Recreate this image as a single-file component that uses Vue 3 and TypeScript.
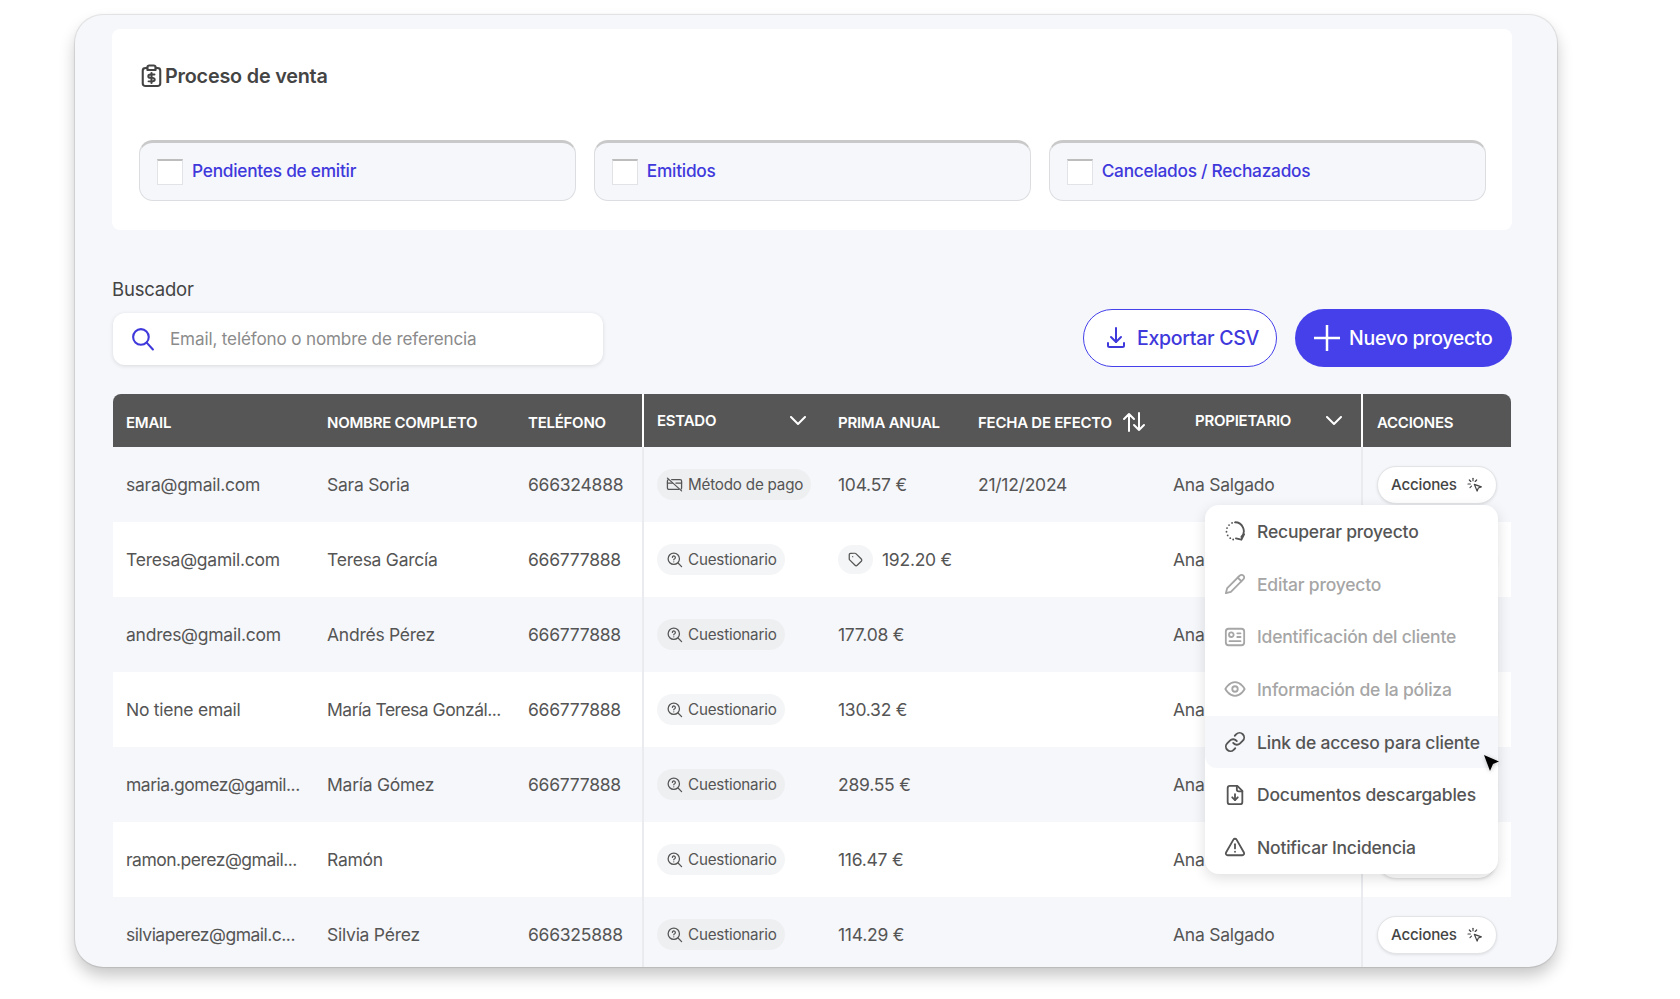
<template>
  <div class="page">
    <div class="card">
      <section class="panel">
        <h2 class="title">
          <svg class="title-icon" viewBox="3 0 18 24" preserveAspectRatio="none"><path v-for="d in icons.clipboard" :key="d" :d="d" /></svg>
          Proceso de venta
        </h2>
        <div class="tabs">
          <label v-for="tab in tabs" :key="tab" class="tab">
            <span class="check"></span>
            <span class="tab-text">{{ tab }}</span>
          </label>
        </div>
      </section>

      <div class="search-label">Buscador</div>
      <div class="toolbar">
        <div class="search">
          <svg class="search-icon" viewBox="0 0 24 24"><path v-for="d in icons.search" :key="d" :d="d" /></svg>
          <span>Email, teléfono o nombre de referencia</span>
        </div>
        <button class="btn btn-outline">
          <svg viewBox="0 0 24 24"><path v-for="d in icons.download" :key="d" :d="d" /></svg>
          Exportar CSV
        </button>
        <button class="btn btn-primary">
          <svg class="plus" viewBox="0 0 26 26"><path d="M13 0v26M0 13h26" /></svg>
          Nuevo proyecto
        </button>
      </div>

      <div class="table">
        <div class="row head">
          <div class="cell">EMAIL</div>
          <div class="cell">NOMBRE COMPLETO</div>
          <div class="cell">TELÉFONO</div>
          <div class="cell split raised">
            ESTADO
            <svg class="chevron" viewBox="0 0 16 10"><path d="M1 1l7 7 7-7" /></svg>
          </div>
          <div class="cell">PRIMA ANUAL</div>
          <div class="cell">
            FECHA DE EFECTO
            <svg class="sort" viewBox="0 0 24 20"><path d="M7 19V2M2 7l5-5 5 5M17 1v17M12 13l5 5 5-5" /></svg>
          </div>
          <div class="cell raised owner-head">
            PROPIETARIO
            <svg class="chevron" viewBox="0 0 16 10"><path d="M1 1l7 7 7-7" /></svg>
          </div>
          <div class="cell split">ACCIONES</div>
        </div>

        <div v-for="r in rows" :key="r.email" class="row body">
          <div :class="['cell', { tight: r.email.endsWith('...') }]">{{ r.email }}</div>
          <div :class="['cell', { tight: r.name.endsWith('...') }]">{{ r.name }}</div>
          <div class="cell">{{ r.phone }}</div>
          <div class="cell split">
            <span class="chip">
              <svg viewBox="0 0 24 24"><path v-for="d in (r.pay ? icons.cardOff : icons.quiz)" :key="d" :d="d" /></svg>
              {{ r.pay ? 'Método de pago' : 'Cuestionario' }}
            </span>
          </div>
          <div class="cell">
            <span v-if="r.tag" class="tag">
              <svg viewBox="0 0 24 24"><path v-for="d in icons.tag" :key="d" :d="d" /></svg>
            </span>
            {{ r.price }}
          </div>
          <div class="cell">{{ r.date }}</div>
          <div class="cell">Ana Salgado</div>
          <div class="cell split">
            <button class="actions">
              Acciones
              <svg viewBox="0 0 24 24"><path v-for="d in icons.click" :key="d" :d="d" /></svg>
            </button>
          </div>
        </div>

        <div class="menu">
          <div
            v-for="item in menu"
            :key="item.label"
            :class="['menu-item', { off: item.off, hover: item.hover }]"
          >
            <svg viewBox="0 0 24 24"><path v-for="d in item.icon" :key="d" :d="d" /></svg>
            {{ item.label }}
          </div>
        </div>
        <svg class="cursor" viewBox="0 0 15 16"><path d="M0 0l15 6.5-6 2.5-3 7z" /></svg>
      </div>
    </div>
  </div>
</template>

<script setup lang="ts">
const icons = {
  clipboard: [
    'M8.5 4H7a2.5 2.5 0 0 0-2.5 2.5v13A2.5 2.5 0 0 0 7 22h10a2.5 2.5 0 0 0 2.5-2.5v-13A2.5 2.5 0 0 0 17 4h-1.500',
    'M10 1.500h4a1.500 1.500 0 0 1 1.500 1.500v3h-7V3A1.500 1.500 0 0 1 10 1.500Z',
    'M14.500 10.500H11a1.700 1.700 0 0 0 0 3.400h2a1.700 1.700 0 0 1 0 3.400H9.500',
    'M12 9v10',
  ],
  search: ['M18 10.500a7.500 7.500 0 1 1-15 0 7.500 7.500 0 0 1 15 0Z', 'M16 16l6 6.500'],
  download: ['M12 2v14', 'M7 11l5 5 5-5', 'M4 17v2.500A1.500 1.500 0 0 0 5.500 21h13a1.500 1.500 0 0 0 1.500-1.500V17'],
  click: [
    'M9 2v3.500', 'M3.500 4.500l2.200 2.200', 'M1.500 10.500H5', 'M14.500 4.500l-2.200 2.200', 'M4.500 16l2.200-2.200',
    'M11 11l10.500 3.800-4.500 1.700-1.800 4.700Z',
  ],
  quiz: [
    'M19 11a8 8 0 1 1-16 0 8 8 0 0 1 16 0Z', 'M22 22l-5-5',
    'M9 9a2.100 2.100 0 1 1 3.200 1.900c-.7.4-1.200.8-1.200 1.600', 'M11 15.200h.01',
  ],
  cardOff: [
    'M2 3l20 18', 'M8 5h12a2 2 0 0 1 2 2v10c0 .6-.3 1.100-.7 1.500', 'M18 19H4a2 2 0 0 1-2-2V7c0-.9.6-1.700 1.400-1.900',
    'M2 10h7', 'M14 10h8',
  ],
  tag: [
    'M12.600 2.600A2 2 0 0 0 11.200 2H4a2 2 0 0 0-2 2v7.200a2 2 0 0 0 .6 1.400l8.700 8.700a2.400 2.400 0 0 0 3.400 0l6.600-6.600a2.400 2.400 0 0 0 0-3.400Z',
    'M7.500 7.500h.01',
  ],
  recover: [
    'M12 2.500a9.500 9.500 0 0 1 7 16', 'M22 15.500l-3 6-6-1.500',
    'M8.800 3.200h.01', 'M5.500 5.500h.01', 'M3.300 8.800h.01', 'M2.700 12.800h.01', 'M4 16.800h.01', 'M6.800 19.800h.01', 'M10 21.300h.01',
  ],
  pencil: ['M17 3a2.850 2.830 0 1 1 4 4L7.500 20.500 2 22l1.500-5.500Z', 'M15 5l4 4'],
  idCard: [
    'M5 3h14a3 3 0 0 1 3 3v12a3 3 0 0 1-3 3H5a3 3 0 0 1-3-3V6a3 3 0 0 1 3-3Z',
    'M10.500 9.500a2.500 2.500 0 1 1-5 0 2.500 2.500 0 0 1 5 0Z', 'M14.500 8H18', 'M14.500 12H18', 'M6 16.500h12',
  ],
  eye: ['M1.500 12s3.700-7.500 10.500-7.500S22.500 12 22.500 12 18.800 19.500 12 19.500 1.500 12 1.500 12Z', 'M15 12a3 3 0 1 1-6 0 3 3 0 0 1 6 0Z'],
  link: [
    'M10 13a5 5 0 0 0 7.540.54l3-3a5 5 0 0 0-7.070-7.070l-1.720 1.710',
    'M14 11a5 5 0 0 0-7.540-.54l-3 3a5 5 0 0 0 7.070 7.070l1.710-1.710',
  ],
  fileDown: [
    'M14.500 2H6.500A2.500 2.500 0 0 0 4 4.500v15A2.500 2.500 0 0 0 6.500 22h11a2.500 2.500 0 0 0 2.500-2.500V7.500Z',
    'M14 2v4a2 2 0 0 0 2 2h4', 'M12 11v6.500', 'M9 14.500l3 3 3-3',
  ],
  alert: [
    'M21.730 18l-8-14a2 2 0 0 0-3.480 0l-8 14A2 2 0 0 0 4 21h16a2 2 0 0 0 1.730-3Z', 'M12 9v4.500', 'M12 17.200h.01',
  ],
}

const tabs = ['Pendientes de emitir', 'Emitidos', 'Cancelados / Rechazados']

const rows = [
  { email: 'sara@gmail.com', name: 'Sara Soria', phone: '666324888', pay: true, price: '104.57 €', date: '21/12/2024' },
  { email: 'Teresa@gamil.com', name: 'Teresa García', phone: '666777888', tag: true, price: '192.20 €' },
  { email: 'andres@gmail.com', name: 'Andrés Pérez', phone: '666777888', price: '177.08 €' },
  { email: 'No tiene email', name: 'María Teresa Gonzál...', phone: '666777888', price: '130.32 €' },
  { email: 'maria.gomez@gamil...', name: 'María Gómez', phone: '666777888', price: '289.55 €' },
  { email: 'ramon.perez@gmail...', name: 'Ramón', phone: '', price: '116.47 €' },
  { email: 'silviaperez@gmail.c...', name: 'Silvia Pérez', phone: '666325888', price: '114.29 €' },
]

const menu = [
  { label: 'Recuperar proyecto', icon: icons.recover },
  { label: 'Editar proyecto', icon: icons.pencil, off: true },
  { label: 'Identificación del cliente', icon: icons.idCard, off: true },
  { label: 'Información de la póliza', icon: icons.eye, off: true },
  { label: 'Link de acceso para cliente', icon: icons.link, hover: true },
  { label: 'Documentos descargables', icon: icons.fileDown },
  { label: 'Notificar Incidencia', icon: icons.alert },
]
</script>

<style>
html, body { margin: 0; background: #fff; }
</style>

<style scoped>
.page {
  height: 999px;
  overflow: hidden;
  padding: 15px 0 0 75px;
  box-sizing: border-box;
  font-family: Inter, "Liberation Sans", sans-serif;
  color: #555;
}

svg {
  fill: none;
  stroke: currentColor;
  stroke-width: 2;
  stroke-linecap: round;
  stroke-linejoin: round;
  flex-shrink: 0;
}

.card {
  width: 1482px;
  height: 952px;
  box-sizing: border-box;
  padding: 14px 45px 0 37px;
  background: #f5f7fb;
  border-radius: 28px;
  overflow: hidden;
  box-shadow: 0 0 1px 1px rgba(0, 0, 0, 0.1), 0 9px 16px rgba(0, 0, 0, 0.22);
}

.panel {
  background: #fff;
  border-radius: 8px;
  padding: 35px 26.5px 29px 27px;
}

.title {
  display: flex;
  align-items: center;
  gap: 3px;
  margin: 0 0 52px 2px;
  height: 24px;
  font-size: 19.8px;
  font-weight: 600;
  letter-spacing: -0.2px;
  color: #444;
}

.title-icon {
  width: 21px;
  height: 24px;
  stroke-width: 1.8;
}

.tabs {
  display: grid;
  grid-template-columns: repeat(3, 1fr);
  gap: 18px;
}

.tab {
  display: flex;
  align-items: center;
  gap: 9px;
  height: 61px;
  box-sizing: border-box;
  padding-left: 17px;
  background: #f5f7fb;
  border: 1px solid #dcdde0;
  border-top: 3px solid #c9c9c9;
  border-radius: 14px;
  font-size: 17.3px;
  font-weight: 500;
  letter-spacing: -0.25px;
  color: #3f39dc;
}

.tab-text {
  margin-bottom: 2px;
}

.check {
  width: 26px;
  height: 26px;
  box-sizing: border-box;
  background: #fff;
  border: 1px solid #e2e3e6;
  border-top: 2px solid #bdbdbd;
}

.search-label {
  margin-top: 47px;
  height: 24px;
  line-height: 24px;
  font-size: 18.5px;
  letter-spacing: -0.2px;
  color: #444;
}

.toolbar {
  display: flex;
  align-items: center;
  gap: 18px;
  margin-top: 9px;
  height: 57px;
}

.search {
  display: flex;
  align-items: center;
  gap: 15px;
  width: 490px;
  height: 52px;
  margin-left: 1px;
  margin-right: auto;
  box-sizing: border-box;
  padding-left: 17px;
  background: #fff;
  border-radius: 12px;
  box-shadow: 0 1px 4px rgba(0, 0, 0, 0.12);
  font-size: 17.1px;
  letter-spacing: -0.15px;
  color: #8b8b8b;
}

.search-icon {
  width: 25px;
  height: 25px;
  color: #3f39dc;
}

.btn {
  display: flex;
  align-items: center;
  height: 58px;
  margin-top: -1px;
  box-sizing: border-box;
  border-radius: 29px;
  padding-bottom: 2px;
  font-family: inherit;
  font-size: 19.5px;
  font-weight: 500;
  letter-spacing: -0.3px;
  white-space: nowrap;
}

.btn-outline {
  width: 194px;
  gap: 9px;
  padding-left: 20px;
  padding-right: 0;
  background: #fff;
  border: 1.5px solid #4540ea;
  color: #3f39dc;
}

.btn-outline svg {
  width: 24px;
  height: 24px;
}

.btn-primary {
  width: 217px;
  gap: 9px;
  padding-left: 19px;
  padding-right: 0;
  background: #4540ea;
  border: none;
  color: #fff;
}

.plus {
  width: 26px;
  height: 26px;
  stroke-width: 2.500;
  stroke-linecap: butt;
}

.table {
  position: relative;
  width: 1398px;
  margin: 27px 0 0 1px;
}

.row {
  display: grid;
  grid-template-columns: 201px 201px 127px 183px 140px 195px 201px 150px;
}

.cell {
  display: flex;
  align-items: center;
  padding-left: 13px;
  white-space: nowrap;
  min-width: 0;
}

.tight {
  letter-spacing: -0.5px;
}

.head {
  height: 53px;
  background: #565656;
  border-radius: 8px 8px 0 0;
  color: #fff;
  font-size: 15px;
  font-weight: 600;
  letter-spacing: -0.25px;
}

.head .cell {
  padding-top: 3px;
}

.head .raised {
  padding-top: 0;
}

.head .split {
  border-left: 2px solid #fff;
}

.owner-head {
  padding-left: 35px;
}

.chevron {
  width: 16px;
  height: 10px;
  margin-left: auto;
  margin-right: 19px;
  stroke-width: 2;
}

.sort {
  width: 24px;
  height: 20px;
  margin-left: 10px;
  stroke-width: 2;
}

.body {
  height: 75px;
  font-size: 17.5px;
  letter-spacing: -0.25px;
}

.body:nth-child(even) {
  background: #f5f7fb;
}

.body:nth-child(odd) {
  background: #fff;
}

.split {
  padding-left: 13px;
  border-left: 2px solid #eaebef;
}

.body .cell:last-child,
.head .cell:last-child {
  padding-left: 14px;
}

.chip {
  display: flex;
  align-items: center;
  gap: 5px;
  height: 31px;
  padding: 0 8px 0 9px;
  border-radius: 16px;
  background: #eeeff1;
  font-size: 15.2px;
  letter-spacing: -0.2px;
}

.body:nth-child(odd) .chip {
  background: #f4f5f6;
}

.chip svg {
  width: 17px;
  height: 17px;
  stroke-width: 1.8;
}

.tag {
  display: flex;
  align-items: center;
  justify-content: center;
  width: 35px;
  height: 29px;
  margin-right: 9px;
  border-radius: 15px;
  background: #f4f5f6;
}

.tag svg {
  width: 15px;
  height: 15px;
}

.actions {
  display: flex;
  align-items: center;
  gap: 10px;
  width: 120px;
  height: 38px;
  box-sizing: border-box;
  padding: 0 0 0 13px;
  background: #fff;
  border: 1px solid #e3e4e6;
  border-radius: 19px;
  box-shadow: 0 1px 3px rgba(0, 0, 0, 0.1);
  font-family: inherit;
  font-size: 15.200px;
  font-weight: 500;
  letter-spacing: -0.2px;
  color: #444;
}

.actions svg {
  width: 16px;
  height: 16px;
  stroke-width: 1.8;
}

.menu {
  position: absolute;
  left: 1092px;
  top: 111px;
  width: 293px;
  background: #fff;
  border-radius: 14px;
  box-shadow: 0 4px 14px rgba(0, 0, 0, 0.13);
  overflow: hidden;
}

.menu-item {
  display: flex;
  align-items: center;
  gap: 11px;
  height: 52.700px;
  padding-left: 19px;
  font-size: 17.500px;
  font-weight: 500;
  letter-spacing: -0.2px;
  color: #555;
  white-space: nowrap;
}

.menu-item svg {
  width: 22px;
  height: 22px;
  stroke-width: 2;
}

.menu-item.off {
  color: #a6a6a6;
}

.menu-item.hover {
  background: #f5f7fb;
  border-radius: 0 0 12px 12px;
}

.cursor {
  position: absolute;
  left: 1371px;
  top: 361px;
  width: 15px;
  height: 16px;
  filter: drop-shadow(0 1px 2px rgba(0, 0, 0, 0.25));
}

.cursor path {
  fill: #000;
  stroke: none;
}
</style>
